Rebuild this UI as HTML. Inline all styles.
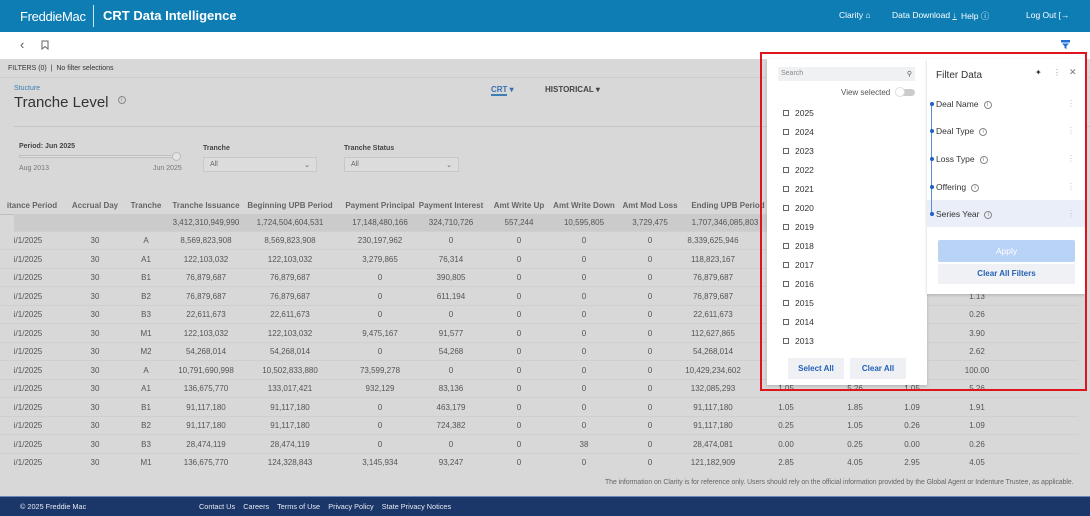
<!DOCTYPE html>
<html><head><meta charset="utf-8"><style>
*{margin:0;padding:0;box-sizing:border-box}
body{width:1090px;height:516px;overflow:hidden;position:relative;background:#d8d8d8;font-family:"Liberation Sans",sans-serif;color:#444}
.a{position:absolute;white-space:nowrap}
#hdr{position:absolute;left:0;top:0;width:1090px;height:32px;background:#0d7db4;color:#fff}
#tb{position:absolute;left:0;top:32px;width:1090px;height:27px;background:#fff}
.row{position:absolute;left:0;width:1078px;height:18px;border-bottom:1px solid #cfcfcf;font-size:8px;color:#555}
.row span{position:absolute;top:4px;transform:translateX(-50%);white-space:nowrap}
.th{font-weight:bold;color:#666}
#foot{position:absolute;left:0;top:496px;width:1090px;height:20px;background:#1b3668;border-top:1px solid #6b86b8;color:#e8ecf4;font-size:7.3px}
.sel{position:absolute;height:15px;border:1px solid #c8c8c8;background:#dcdcdc;font-size:7px;color:#666;padding:3px 6px}
.yr{position:absolute;left:783px;font-size:8.5px;color:#333}
.yr i{display:inline-block;width:6px;height:6px;border:1px solid #666;margin-right:6px;font-style:normal}
.fi{position:absolute;left:936px;font-size:8.5px;color:#333}
.dot{position:absolute;left:930px;width:4px;height:4px;border-radius:2px;background:#1f5fc8}
.info{display:inline-block;width:8px;height:8px;border:1px solid #888;border-radius:50%;font-size:6px;line-height:7px;text-align:center;color:#888;margin-left:5px;vertical-align:middle}
.vd{position:absolute;left:1067px;font-size:8px;color:#bbb}
</style></head><body>
<div id="hdr">
 <div class="a" style="left:20px;top:9px;font-size:13px;letter-spacing:-.3px">Freddie<span>Mac</span></div>
 <div class="a" style="left:93px;top:5px;width:1px;height:22px;background:#fff;opacity:.8"></div>
 <div class="a" style="left:103px;top:8px;font-size:13px;font-weight:bold">CRT Data Intelligence</div>
 <div class="a" style="left:839px;top:10px;font-size:8.5px">Clarity ⌂</div>
 <div class="a" style="left:892px;top:10px;font-size:8.5px">Data Download <span style="text-decoration:underline">↓</span></div>
 <div class="a" style="left:961px;top:10px;font-size:8.5px">Help ⓘ</div>
 <div class="a" style="left:1026px;top:10px;font-size:8.5px">Log Out [→</div>
</div>
<div id="tb">
 <div class="a" style="left:20px;top:5px;font-size:13px;color:#555">‹</div>
 <svg class="a" style="left:41px;top:8px" width="8" height="10" viewBox="0 0 8 10"><path d="M1 1H7V9L4 6.5L1 9Z" fill="none" stroke="#666" stroke-width="1"/></svg>
 <svg class="a" style="left:1061px;top:8px" width="9" height="9" viewBox="0 0 9 9"><path d="M0 0H9V2.5H0Z M1 3.5H8L5.5 6V9L3.5 8V6Z" fill="#1f6fd6"/></svg>
</div>
<div class="a" style="left:0;top:59px;width:1090px;height:19px;border-bottom:1px solid #ccc"></div>
<div class="a" style="left:8px;top:65px;font-size:7px;color:#333">FILTERS (0) &nbsp;|&nbsp; No filter selections</div>
<div class="a" style="left:14px;top:85px;font-size:7px;color:#3b7fb3">Stucture</div>
<div class="a" style="left:14px;top:94px;font-size:15px;color:#333">Tranche Level <span class="info" style="vertical-align:top;margin-top:2px">i</span></div>
<div class="a" style="left:491px;top:85px;font-size:8px;color:#3b6fb0;font-weight:bold"><span style="border-bottom:2px solid #3b7fb3">CRT</span> ▾</div>
<div class="a" style="left:545px;top:85px;font-size:8px;color:#444;font-weight:bold">HISTORICAL ▾</div>
<div class="a" style="left:14px;top:126px;width:1076px;height:1px;background:#c4c4c4"></div>
<div class="a" style="left:19px;top:143px;font-size:7px;font-weight:bold;color:#444">Period: Jun 2025</div>
<div class="a" style="left:19px;top:155px;width:160px;height:3px;border:1px solid #c0c0c0;background:#e0e0e0"></div>
<div class="a" style="left:172px;top:152px;width:9px;height:9px;border-radius:50%;border:1px solid #bbb;background:#e4e4e4"></div>
<div class="a" style="left:19px;top:165px;font-size:7px;color:#777">Aug 2013</div>
<div class="a" style="left:153px;top:165px;font-size:7px;color:#777">Jun 2025</div>
<div class="a" style="left:203px;top:145px;font-size:7px;font-weight:bold;color:#444">Tranche</div>
<div class="sel" style="left:203px;top:157px;width:114px">All<span style="float:right">⌄</span></div>
<div class="a" style="left:344px;top:145px;font-size:7px;font-weight:bold;color:#444">Tranche Status</div>
<div class="sel" style="left:344px;top:157px;width:115px">All<span style="float:right">⌄</span></div>

<div class="row th" style="top:197px;border-bottom:1px solid #bdbdbd;left:0"><span style="left:32px">itance Period</span><span style="left:95px">Accrual Day</span><span style="left:146px">Tranche</span><span style="left:206px">Tranche Issuance</span><span style="left:290px">Beginning UPB Period</span><span style="left:380px">Payment Principal</span><span style="left:451px">Payment Interest</span><span style="left:519px">Amt Write Up</span><span style="left:584px">Amt Write Down</span><span style="left:650px">Amt Mod Loss</span><span style="left:728px">Ending UPB Period</span></div>
<div class="row" style="top:214px;background:#cbcbcb;left:14px;width:1064px"><span style="left:192px">3,412,310,949,990</span><span style="left:276px">1,724,504,604,531</span><span style="left:366px">17,148,480,166</span><span style="left:437px">324,710,726</span><span style="left:505px">557,244</span><span style="left:570px">10,595,805</span><span style="left:636px">3,729,475</span><span style="left:711px">1,707,346,085,803</span></div>

<div class="row" style="top:232px"><span style="left:28px">i/1/2025</span><span style="left:95px">30</span><span style="left:146px">A</span><span style="left:206px">8,569,823,908</span><span style="left:290px">8,569,823,908</span><span style="left:380px">230,197,962</span><span style="left:451px">0</span><span style="left:519px">0</span><span style="left:584px">0</span><span style="left:650px">0</span><span style="left:713px">8,339,625,946</span></div>
<div class="row" style="top:250.5px"><span style="left:28px">i/1/2025</span><span style="left:95px">30</span><span style="left:146px">A1</span><span style="left:206px">122,103,032</span><span style="left:290px">122,103,032</span><span style="left:380px">3,279,865</span><span style="left:451px">76,314</span><span style="left:519px">0</span><span style="left:584px">0</span><span style="left:650px">0</span><span style="left:713px">118,823,167</span></div>
<div class="row" style="top:269px"><span style="left:28px">i/1/2025</span><span style="left:95px">30</span><span style="left:146px">B1</span><span style="left:206px">76,879,687</span><span style="left:290px">76,879,687</span><span style="left:380px">0</span><span style="left:451px">390,805</span><span style="left:519px">0</span><span style="left:584px">0</span><span style="left:650px">0</span><span style="left:713px">76,879,687</span></div>
<div class="row" style="top:287.5px"><span style="left:28px">i/1/2025</span><span style="left:95px">30</span><span style="left:146px">B2</span><span style="left:206px">76,879,687</span><span style="left:290px">76,879,687</span><span style="left:380px">0</span><span style="left:451px">611,194</span><span style="left:519px">0</span><span style="left:584px">0</span><span style="left:650px">0</span><span style="left:713px">76,879,687</span><span style="left:977px">1.13</span></div>
<div class="row" style="top:306px"><span style="left:28px">i/1/2025</span><span style="left:95px">30</span><span style="left:146px">B3</span><span style="left:206px">22,611,673</span><span style="left:290px">22,611,673</span><span style="left:380px">0</span><span style="left:451px">0</span><span style="left:519px">0</span><span style="left:584px">0</span><span style="left:650px">0</span><span style="left:713px">22,611,673</span><span style="left:977px">0.26</span></div>
<div class="row" style="top:324.5px"><span style="left:28px">i/1/2025</span><span style="left:95px">30</span><span style="left:146px">M1</span><span style="left:206px">122,103,032</span><span style="left:290px">122,103,032</span><span style="left:380px">9,475,167</span><span style="left:451px">91,577</span><span style="left:519px">0</span><span style="left:584px">0</span><span style="left:650px">0</span><span style="left:713px">112,627,865</span><span style="left:977px">3.90</span></div>
<div class="row" style="top:343px"><span style="left:28px">i/1/2025</span><span style="left:95px">30</span><span style="left:146px">M2</span><span style="left:206px">54,268,014</span><span style="left:290px">54,268,014</span><span style="left:380px">0</span><span style="left:451px">54,268</span><span style="left:519px">0</span><span style="left:584px">0</span><span style="left:650px">0</span><span style="left:713px">54,268,014</span><span style="left:977px">2.62</span></div>
<div class="row" style="top:361.5px"><span style="left:28px">i/1/2025</span><span style="left:95px">30</span><span style="left:146px">A</span><span style="left:206px">10,791,690,998</span><span style="left:290px">10,502,833,880</span><span style="left:380px">73,599,278</span><span style="left:451px">0</span><span style="left:519px">0</span><span style="left:584px">0</span><span style="left:650px">0</span><span style="left:713px">10,429,234,602</span><span style="left:977px">100.00</span></div>
<div class="row" style="top:380px"><span style="left:28px">i/1/2025</span><span style="left:95px">30</span><span style="left:146px">A1</span><span style="left:206px">136,675,770</span><span style="left:290px">133,017,421</span><span style="left:380px">932,129</span><span style="left:451px">83,136</span><span style="left:519px">0</span><span style="left:584px">0</span><span style="left:650px">0</span><span style="left:713px">132,085,293</span><span style="left:786px">1.05</span><span style="left:855px">5.26</span><span style="left:912px">1.05</span><span style="left:977px">5.26</span></div>
<div class="row" style="top:398.5px"><span style="left:28px">i/1/2025</span><span style="left:95px">30</span><span style="left:146px">B1</span><span style="left:206px">91,117,180</span><span style="left:290px">91,117,180</span><span style="left:380px">0</span><span style="left:451px">463,179</span><span style="left:519px">0</span><span style="left:584px">0</span><span style="left:650px">0</span><span style="left:713px">91,117,180</span><span style="left:786px">1.05</span><span style="left:855px">1.85</span><span style="left:912px">1.09</span><span style="left:977px">1.91</span></div>
<div class="row" style="top:417px"><span style="left:28px">i/1/2025</span><span style="left:95px">30</span><span style="left:146px">B2</span><span style="left:206px">91,117,180</span><span style="left:290px">91,117,180</span><span style="left:380px">0</span><span style="left:451px">724,382</span><span style="left:519px">0</span><span style="left:584px">0</span><span style="left:650px">0</span><span style="left:713px">91,117,180</span><span style="left:786px">0.25</span><span style="left:855px">1.05</span><span style="left:912px">0.26</span><span style="left:977px">1.09</span></div>
<div class="row" style="top:435.5px"><span style="left:28px">i/1/2025</span><span style="left:95px">30</span><span style="left:146px">B3</span><span style="left:206px">28,474,119</span><span style="left:290px">28,474,119</span><span style="left:380px">0</span><span style="left:451px">0</span><span style="left:519px">0</span><span style="left:584px">38</span><span style="left:650px">0</span><span style="left:713px">28,474,081</span><span style="left:786px">0.00</span><span style="left:855px">0.25</span><span style="left:912px">0.00</span><span style="left:977px">0.26</span></div>
<div class="row" style="top:454px;border-bottom:none"><span style="left:28px">i/1/2025</span><span style="left:95px">30</span><span style="left:146px">M1</span><span style="left:206px">136,675,770</span><span style="left:290px">124,328,843</span><span style="left:380px">3,145,934</span><span style="left:451px">93,247</span><span style="left:519px">0</span><span style="left:584px">0</span><span style="left:650px">0</span><span style="left:713px">121,182,909</span><span style="left:786px">2.85</span><span style="left:855px">4.05</span><span style="left:912px">2.95</span><span style="left:977px">4.05</span></div>
<div class="a" style="left:605px;top:479px;font-size:6.9px;color:#666;letter-spacing:-0.05px">The information on Clarity is for reference only. Users should rely on the official information provided by the Global Agent or Indenture Trustee, as applicable.</div>

<div id="foot">
 <div class="a" style="left:20px;top:5px">© 2025 Freddie Mac</div>
 <div class="a" style="left:199px;top:5px">Contact Us &nbsp;&nbsp; Careers &nbsp;&nbsp; Terms of Use &nbsp;&nbsp; Privacy Policy &nbsp;&nbsp; State Privacy Notices</div>
</div>

<div class="a" style="left:767px;top:59px;width:160px;height:326px;background:#fff;box-shadow:0 1px 3px rgba(0,0,0,.2)"></div>
<div class="a" style="left:778px;top:67px;width:137px;height:14px;background:#f0f1f3;font-size:7px;color:#888;padding:3px 3px">Search<span style="float:right;color:#555">⚲</span></div>
<div class="a" style="left:841px;top:88px;font-size:8px;color:#555">View selected</div>
<div class="a" style="left:897px;top:89px;width:18px;height:7px;border-radius:4px;background:#ccc"></div>
<div class="a" style="left:895px;top:87px;width:10px;height:10px;border-radius:50%;background:#fff;border:1px solid #ddd"></div>
<div class="yr" style="top:108px"><i></i>2025</div>
<div class="yr" style="top:127px"><i></i>2024</div>
<div class="yr" style="top:146px"><i></i>2023</div>
<div class="yr" style="top:165px"><i></i>2022</div>
<div class="yr" style="top:184px"><i></i>2021</div>
<div class="yr" style="top:203px"><i></i>2020</div>
<div class="yr" style="top:222px"><i></i>2019</div>
<div class="yr" style="top:241px"><i></i>2018</div>
<div class="yr" style="top:260px"><i></i>2017</div>
<div class="yr" style="top:279px"><i></i>2016</div>
<div class="yr" style="top:298px"><i></i>2015</div>
<div class="yr" style="top:317px"><i></i>2014</div>
<div class="yr" style="top:336px"><i></i>2013</div>
<div class="a" style="left:788px;top:358px;width:56px;height:21px;background:#eef0f3;font-size:8px;color:#2360b8;text-align:center;line-height:21px;font-weight:bold">Select All</div>
<div class="a" style="left:850px;top:358px;width:56px;height:21px;background:#eef0f3;font-size:8px;color:#2360b8;text-align:center;line-height:21px;font-weight:bold">Clear All</div>

<div class="a" style="left:927px;top:59px;width:158px;height:235px;background:#fff;box-shadow:0 1px 3px rgba(0,0,0,.2)"></div>
<div class="a" style="left:936px;top:70px;font-size:10px;color:#333">Filter Data</div>
<div class="a" style="left:1035px;top:68px;font-size:8px;color:#333">✦</div>
<div class="a" style="left:1053px;top:68px;font-size:8px;color:#888">⋮</div>
<div class="a" style="left:1069px;top:67px;font-size:9px;color:#777">✕</div>
<div class="a" style="left:927px;top:200px;width:158px;height:27px;background:#e9eef8"></div>
<div class="a" style="left:931px;top:104px;width:1px;height:110px;background:#5b8ad6"></div>
<div class="dot" style="top:102px"></div><div class="fi" style="top:99px">Deal Name<span class="info">i</span></div><div class="vd" style="top:99px">⋮</div>
<div class="dot" style="top:129px"></div><div class="fi" style="top:126px">Deal Type<span class="info">i</span></div><div class="vd" style="top:126px">⋮</div>
<div class="dot" style="top:157px"></div><div class="fi" style="top:154px">Loss Type<span class="info">i</span></div><div class="vd" style="top:154px">⋮</div>
<div class="dot" style="top:185px"></div><div class="fi" style="top:182px">Offering<span class="info">i</span></div><div class="vd" style="top:182px">⋮</div>
<div class="dot" style="top:212px"></div><div class="fi" style="top:209px">Series Year<span class="info">i</span></div><div class="vd" style="top:209px">⋮</div>
<div class="a" style="left:938px;top:240px;width:137px;height:22px;background:#b9d3f6;border-radius:2px;font-size:8.5px;color:#fff;text-align:center;line-height:22px">Apply</div>
<div class="a" style="left:938px;top:264px;width:137px;height:20px;background:#eff1f4;font-size:8px;color:#2360b8;text-align:center;line-height:20px;font-weight:bold">Clear All Filters</div>

<div class="a" style="left:760px;top:52px;width:327px;height:339px;border:2px solid #e0141c"></div>
</body></html>
